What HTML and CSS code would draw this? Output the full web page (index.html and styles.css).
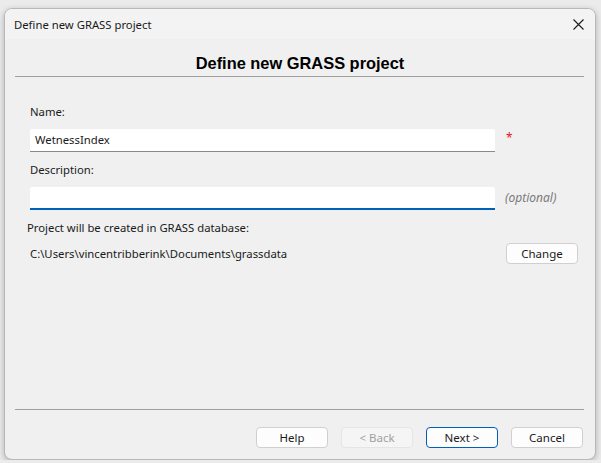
FILE: index.html
```html
<!DOCTYPE html>
<html lang="en">
<head>
    <meta charset="UTF-8">
    <meta name="viewport" content="width=device-width, initial-scale=1.0">
    <title>Define new GRASS project</title>
    <link rel="stylesheet" href="styles.css">
</head>
<body>
    <div class="window">
        <div class="titlebar">
            <span class="title">Define new GRASS project</span>
            <span class="close">
                <svg width="11" height="11" viewBox="0 0 11 11">
                    <path d="M0.5 0.5 L10.5 10.5 M10.5 0.5 L0.5 10.5" stroke="#1a1a1a" stroke-width="1.1" fill="none"/>
                </svg>
            </span>
        </div>

        <div class="content">
            <h2 class="heading">Define new GRASS project</h2>
            <div class="rule"></div>

            <div class="form">
                <div class="label">Name:</div>
                <div class="field-row">
                    <div class="input">WetnessIndex</div>
                    <span class="required">*</span>
                </div>

                <div class="label">Description:</div>
                <div class="field-row">
                    <div class="input input-focus"></div>
                    <span class="optional">(optional)</span>
                </div>

                <div class="label label-db">Project will be created in GRASS database:</div>
                <div class="path-row">
                    <span>C:\Users\vincentribberink\Documents\grassdata</span>
                    <button class="button">Change</button>
                </div>
            </div>

            <div class="footer">
                <div class="rule"></div>
                <div class="buttons">
                    <button class="button">Help</button>
                    <button class="button disabled">&lt; Back</button>
                    <button class="button default">Next &gt;</button>
                    <button class="button">Cancel</button>
                </div>
            </div>
        </div>
    </div>
</body>
</html>
```

FILE: styles.css
```css
body {
    margin: 0;
    background-color: #ebebeb;
    font-family: "Noto Sans", sans-serif;
    font-size: 11.3px;
    color: #1a1a1a;
}

.window {
    margin: 8px 5px 0 4px;
    width: 590px;
    height: 450px;
    background-color: #f0f0f0;
    border: 1px solid #b8b8b8;
    border-radius: 8px;
    box-shadow: 0 2px 6px rgba(0, 0, 0, 0.25);
    display: flex;
    flex-direction: column;
    overflow: hidden;
}

.titlebar {
    height: 30px;
    background-color: #f3f3f3;
    display: flex;
    align-items: center;
    justify-content: space-between;
    padding: 0 10px 0 9px;
    flex-shrink: 0;
}

.title {
    padding-top: 1px;
}

.close {
    display: flex;
    margin-right: 1px;
}

.content {
    flex: 1;
    display: flex;
    flex-direction: column;
}

.heading {
    margin: 14px 0 0;
    text-align: center;
    font-family: "Liberation Sans", Arial, sans-serif;
    font-size: 16.4px;
    line-height: 20px;
    font-weight: bold;
    color: #000;
}

.rule {
    height: 1px;
    background-color: #a0a0a0;
    margin: 3px 11px 0 10px;
}

.form {
    flex: 1;
    padding: 27px 0 0 25px;
}

.label {
    line-height: 16px;
    height: 16px;
}

.field-row {
    display: flex;
    align-items: center;
    margin: 9px 0 10px;
}

.input {
    width: 456px;
    height: 22px;
    line-height: 22px;
    padding: 0 4px 0 5px;
    background-color: #fff;
    border-bottom: 1px solid #8a8a8a;
    border-radius: 2px 2px 0 0;
}

.input-focus {
    height: 21px;
    border-bottom: 2px solid #005fb8;
}

.required {
    color: #e81123;
    margin-left: 11px;
    font-size: 12px;
    margin-top: -6px;
}

.optional {
    color: #7a7a7a;
    font-style: italic;
    font-size: 12px;
    margin-left: 10px;
    margin-top: -2px;
}

.label-db {
    margin: 5px 0 0 -3px;
}

.path-row {
    display: flex;
    justify-content: space-between;
    align-items: center;
    margin: 7px 17px 0 0;
}

.button {
    font-family: "Noto Sans", sans-serif;
    font-size: 11.5px;
    color: #1a1a1a;
    width: 72px;
    height: 21px;
    padding: 0;
    background-color: #fdfdfd;
    border: 1px solid #d0d0d0;
    border-radius: 4px;
}

.footer {
    padding-bottom: 11px;
}

.buttons {
    display: flex;
    justify-content: flex-end;
    gap: 13px;
    margin: 17px 12px 0 0;
}

.disabled {
    background-color: #f5f5f5;
    border-color: #e5e5e5;
    color: #a0a0a0;
}

.default {
    border-color: #005fb8;
}
```
